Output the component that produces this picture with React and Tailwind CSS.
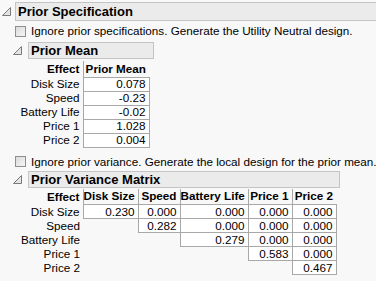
import React from "react";

const font = { fontFamily: "'Liberation Sans', Arial, sans-serif" };

const Toggle = () => (
  <svg width="9" height="9" viewBox="0 0 9 9" className="shrink-0">
    <polygon points="8.5,0.5 8.5,8.5 0.5,8.5" fill="#e4e4e4" stroke="#7a7a7a" strokeWidth="1" />
  </svg>
);

const Checkbox = () => (
  <div className="w-[11px] h-[11px] border border-[#8f8f8f] bg-gradient-to-br from-[#dcdcdc] to-[#f4f4f4] shrink-0" />
);

const SectionBar = ({ title, width, className = "" }) => (
  <div className={`flex items-center gap-[6px] ${className}`}>
    <Toggle />
    <div
      className={`${width} h-[17px] flex items-center border border-[#c4c4c4] bg-[#ebebeb] pl-[2px] text-[13px] font-bold text-black leading-none whitespace-nowrap`}
    >
      {title}
    </div>
  </div>
);

const meanRows = [
  ["Disk Size", "0.078"],
  ["Speed", "-0.23"],
  ["Battery Life", "-0.02"],
  ["Price 1", "1.028"],
  ["Price 2", "0.004"],
];

const varCols = [
  ["Disk Size", "w-[55px]"],
  ["Speed", "w-[42px]"],
  ["Battery Life", "w-[68px]"],
  ["Price 1", "w-[44px]"],
  ["Price 2", "w-[44px]"],
];

const varRows = [
  ["Disk Size", ["0.230", "0.000", "0.000", "0.000", "0.000"]],
  ["Speed", [null, "0.282", "0.000", "0.000", "0.000"]],
  ["Battery Life", [null, null, "0.279", "0.000", "0.000"]],
  ["Price 1", [null, null, null, "0.583", "0.000"]],
  ["Price 2", [null, null, null, null, "0.467"]],
];

const cell = "h-[14px] p-0 border border-[#a8a8a8] bg-white text-right pr-[3px] leading-none whitespace-nowrap";
const label = "h-[14px] p-0 text-right pr-[3px] leading-none whitespace-nowrap";
const head = "h-[16px] p-0 text-right pr-[3px] font-bold leading-none whitespace-nowrap";

export default function App() {
  return (
    <div className="w-[376px] h-[281px] bg-[#f8f8f8] text-black overflow-hidden pt-[2px] text-[11.7px]" style={font}>
      {/* Prior Specification */}
      <div className="flex items-center gap-[4px] pl-[2px]">
        <Toggle />
        <div className="flex-1 h-[19px] flex items-center border-y border-l border-[#c4c4c4] bg-[#ebebeb] pl-[2px] text-[13px] font-bold leading-none">
          Prior Specification
        </div>
      </div>

      <div className="flex items-center gap-[5px] pl-[15px] mt-[4px] h-[12px] whitespace-nowrap">
        <Checkbox />
        <span>Ignore prior specifications. Generate the Utility Neutral design.</span>
      </div>

      <SectionBar title="Prior Mean" width="w-[126px]" className="pl-[13px] mt-[5px]" />

      {/* Prior Mean table */}
      <table className="table-fixed border-collapse w-[149px] mt-[2px]">
        <thead>
          <tr>
            <th className={`${head} w-[83px]`}>Effect</th>
            <th className={`${head} w-[66px] border-l border-[#a8a8a8]`}>Prior Mean</th>
          </tr>
        </thead>
        <tbody>
          {meanRows.map(([name, val]) => (
            <tr key={name}>
              <td className={label}>{name}</td>
              <td className={cell}>{val}</td>
            </tr>
          ))}
        </tbody>
      </table>

      <div className="flex items-center gap-[5px] pl-[15px] mt-[8px] h-[12px] whitespace-nowrap">
        <Checkbox />
        <span>Ignore prior variance. Generate the local design for the prior mean.</span>
      </div>

      <SectionBar title="Prior Variance Matrix" width="w-[312px]" className="pl-[13px] mt-[3px]" />

      {/* Prior Variance Matrix table */}
      <table className="table-fixed border-collapse w-[336px] mt-[1px]">
        <thead>
          <tr>
            <th className={`${head} w-[83px]`}>Effect</th>
            {varCols.map(([c, w]) => (
              <th key={c} className={`${head} ${w} border-l border-[#a8a8a8]`}>
                {c}
              </th>
            ))}
          </tr>
        </thead>
        <tbody>
          {varRows.map(([name, vals]) => (
            <tr key={name}>
              <td className={label}>{name}</td>
              {vals.map((v, i) =>
                v === null ? (
                  <td key={i} className="p-0" />
                ) : (
                  <td key={i} className={cell}>
                    {v}
                  </td>
                )
              )}
            </tr>
          ))}
        </tbody>
      </table>
    </div>
  );
}
